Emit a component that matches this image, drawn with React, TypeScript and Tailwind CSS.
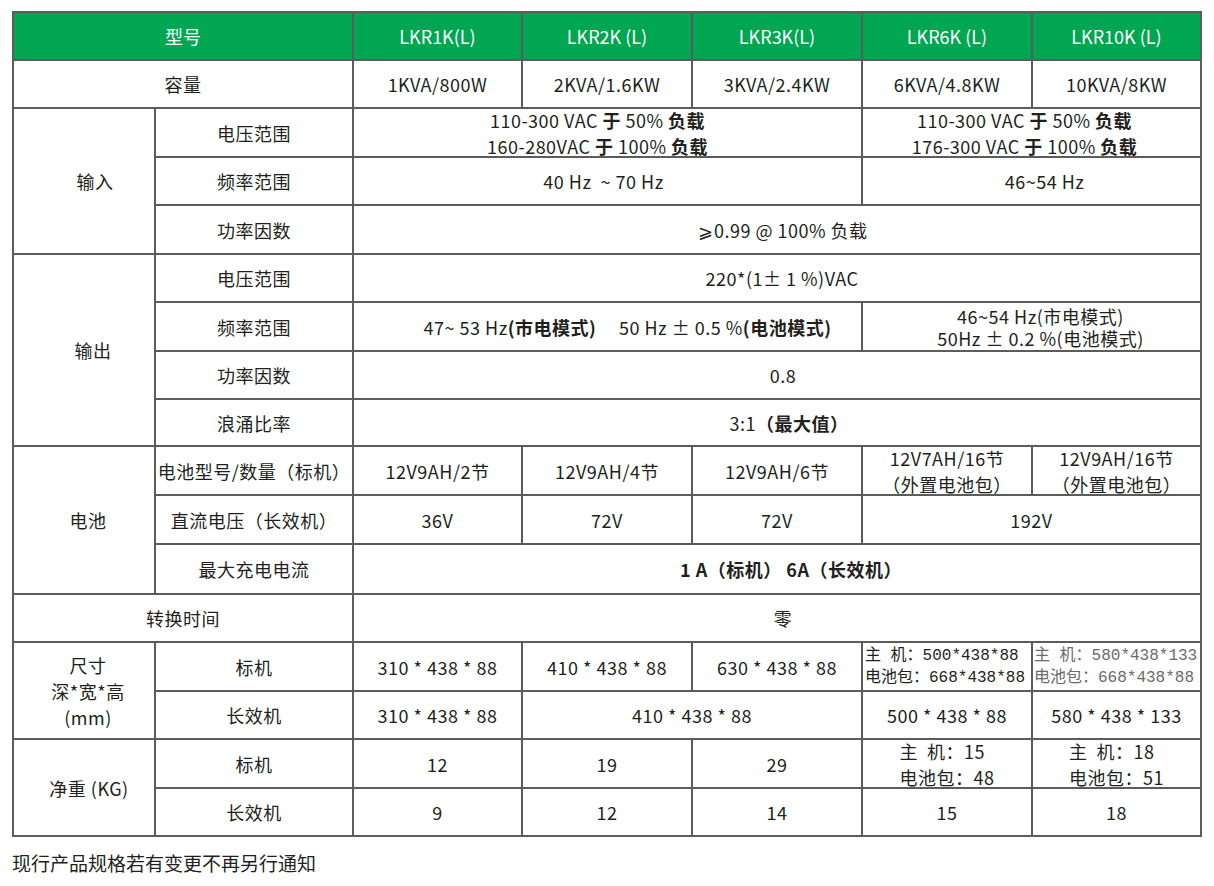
import React from 'react'

const mono = { fontFamily: '"Liberation Mono", "Noto Sans CJK SC", monospace' }

function C({
  children,
  className = '',
  head = false,
}: {
  children?: React.ReactNode
  className?: string
  head?: boolean
}) {
  return (
    <div
      className={`flex items-center justify-center text-center ${
        head ? 'bg-[#00a651] text-white' : 'bg-white tracking-[0.5px]'
      } ${className}`}
    >
      {children}
    </div>
  )
}

const B = ({ children }: { children: React.ReactNode }) => <b className="font-bold">{children}</b>

export default function App() {
  const models = ['LKR1K(L)', 'LKR2K (L)', 'LKR3K(L)', 'LKR6K (L)', 'LKR10K (L)']
  const capacity = ['1KVA/800W', '2KVA/1.6KW', '3KVA/2.4KW', '6KVA/4.8KW', '10KVA/8KW']

  return (
    <div
      className="min-h-[886px] w-[1214px] bg-white pl-[12px] pt-[11px] text-[18px] leading-[26px] text-[#231f20]"
      style={{ fontFamily: '"Noto Sans CJK SC", "Noto Sans", sans-serif' }}
    >
      <div className="grid w-[1190px] grid-cols-[140px_196px_167px_168px_168px_168px_167px] grid-rows-[46px_46px_47px_46px_47px_46px_47px_46px_45px_47px_47px_48px_46px_47px_46px_47px_46px] gap-[2px] bg-[#5c5c5c] p-[2px]">
        <C head className="col-span-2">型号</C>
        {models.map((m) => (
          <C head key={m}>{m}</C>
        ))}

        <C className="col-span-2">容量</C>
        {capacity.map((c) => (
          <C key={c}>{c}</C>
        ))}

        {/* 输入 */}
        <C className="row-span-3 pl-[22px]">输入</C>
        <C>电压范围</C>
        <C className="col-span-3 pr-[20px]">
          <div>
            <div>110-300 VAC <B>于</B> 50% <B>负载</B></div>
            <div>160-280VAC <B>于</B> 100% <B>负载</B></div>
          </div>
        </C>
        <C className="col-span-2 pr-[14px]">
          <div>
            <div>110-300 VAC <B>于</B> 50% <B>负载</B></div>
            <div>176-300 VAC <B>于</B> 100% <B>负载</B></div>
          </div>
        </C>
        <C>频率范围</C>
        <C className="col-span-3 pr-[8px]">40 Hz&nbsp; ~ 70 Hz</C>
        <C className="col-span-2 pl-[26px]">46~54 Hz</C>
        <C>功率因数</C>
        <C className="col-span-5 pl-[12px]">⩾0.99 @ 100% 负载</C>

        {/* 输出 */}
        <C className="row-span-4 pl-[18px]">输出</C>
        <C>电压范围</C>
        <C className="col-span-5 pl-[10px]">220*(1± 1 %)VAC</C>
        <C>频率范围</C>
        <C className="col-span-3 pl-[40px]">
          <span>
            47~ 53 Hz<B>(市电模式)</B>&nbsp;&nbsp;&nbsp;&nbsp; 50 Hz ± 0.5 %<B>(电池模式)</B>
          </span>
        </C>
        <C className="col-span-2 pl-[18px] leading-[22px]">
          <div>
            <div>46~54 Hz(市电模式)</div>
            <div>50Hz ± 0.2 %(电池模式)</div>
          </div>
        </C>
        <C>功率因数</C>
        <C className="col-span-5 pl-[12px]">0.8</C>
        <C>浪涌比率</C>
        <C className="col-span-5 pl-[24px]">
          <span>
            3:1<B>（最大值）</B>
          </span>
        </C>

        {/* 电池 */}
        <C className="row-span-3 pl-[8px]">电池</C>
        <C>电池型号/数量（标机）</C>
        <C>12V9AH/2节</C>
        <C>12V9AH/4节</C>
        <C>12V9AH/6节</C>
        <C>
          <div>
            <div>12V7AH/16节</div>
            <div>（外置电池包）</div>
          </div>
        </C>
        <C>
          <div>
            <div>12V9AH/16节</div>
            <div>（外置电池包）</div>
          </div>
        </C>
        <C>直流电压（长效机）</C>
        <C>36V</C>
        <C>72V</C>
        <C>72V</C>
        <C className="col-span-2">192V</C>
        <C>最大充电电流</C>
        <C className="col-span-5 pl-[28px]">
          <B>1 A（标机） 6A（长效机）</B>
        </C>

        <C className="col-span-2">转换时间</C>
        <C className="col-span-5 pl-[12px]">零</C>

        {/* 尺寸 */}
        <C className="row-span-2 pl-[8px]">
          <div>
            <div>尺寸</div>
            <div>深*宽*高</div>
            <div>(mm)</div>
          </div>
        </C>
        <C>标机</C>
        <C>310 * 438 * 88</C>
        <C>410 * 438 * 88</C>
        <C>630 * 438 * 88</C>
        <C className="justify-start whitespace-nowrap pl-[2px] text-left text-[16px] leading-[22px] tracking-normal">
          <div style={mono}>
            <div>主 机：500*438*88</div>
            <div>电池包：668*438*88</div>
          </div>
        </C>
        <C className="justify-start whitespace-nowrap pl-[1px] text-left text-[16px] leading-[22px] tracking-normal text-[#6b6b6b]">
          <div style={mono}>
            <div>主 机：580*438*133</div>
            <div>电池包：668*438*88</div>
          </div>
        </C>
        <C>长效机</C>
        <C>310 * 438 * 88</C>
        <C className="col-span-2">410 * 438 * 88</C>
        <C>500 * 438 * 88</C>
        <C>580 * 438 * 133</C>

        {/* 净重 */}
        <C className="row-span-2 pl-[10px]">净重 (KG)</C>
        <C>标机</C>
        <C>12</C>
        <C>19</C>
        <C>29</C>
        <C>
          <div className="text-left">
            <div>主&nbsp;&nbsp;机：15</div>
            <div>电池包：48</div>
          </div>
        </C>
        <C>
          <div className="text-left">
            <div>主&nbsp;&nbsp;机：18</div>
            <div>电池包：51</div>
          </div>
        </C>
        <C>长效机</C>
        <C>9</C>
        <C>12</C>
        <C>14</C>
        <C>15</C>
        <C>18</C>
      </div>

      <p className="mt-[13px] text-[19px] leading-[26px]">现行产品规格若有变更不再另行通知</p>
    </div>
  )
}
